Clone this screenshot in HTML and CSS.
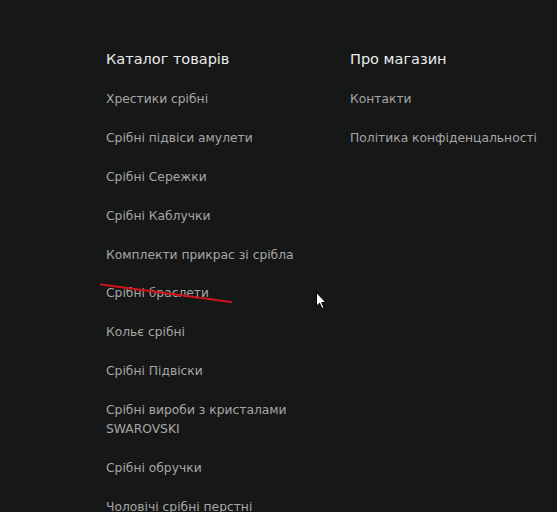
FILE: index.html
```html
<!DOCTYPE html>
<html lang="uk">
<head>
<meta charset="utf-8">
<link rel="stylesheet" href="styles.css">
</head>
<body>
<footer class="footer">
  <div class="col col-catalog">
    <h3 class="col-title">Каталог товарів</h3>
    <ul class="links">
      <li><a href="#">Хрестики срібні</a></li>
      <li><a href="#">Срібні підвіси амулети</a></li>
      <li><a href="#">Срібні Сережки</a></li>
      <li><a href="#">Срібні Каблучки</a></li>
      <li><a href="#">Комплекти прикрас зі срібла</a></li>
      <li><a href="#">Срібні браслети</a></li>
      <li><a href="#">Кольє срібні</a></li>
      <li><a href="#">Срібні Підвіски</a></li>
      <li><a href="#">Срібні вироби з кристалами SWAROVSKI</a></li>
      <li><a href="#">Срібні обручки</a></li>
      <li><a href="#">Чоловічі срібні перстні</a></li>
    </ul>
  </div>
  <div class="col col-about">
    <h3 class="col-title">Про магазин</h3>
    <ul class="links">
      <li><a href="#">Контакти</a></li>
      <li><a href="#">Політика конфіденцальності</a></li>
    </ul>
  </div>
</footer>
<svg class="annotation" width="557" height="512" viewBox="0 0 557 512">
  <line x1="101" y1="284.5" x2="231" y2="302" stroke="#d0141a" stroke-width="2.2" stroke-linecap="round"/>
</svg>
<svg class="cursor" width="12" height="18" viewBox="0 0 12 18">
  <path d="M0.5 0.5 L0.5 14 L3.6 11.2 L6 16.5 L8 15.6 L5.7 10.5 L9.8 10.5 Z" fill="#ffffff" stroke="#000000" stroke-width="1"/>
</svg>
</body>
</html>
```

FILE: styles.css
```css
html, body {
  margin: 0;
  padding: 0;
  background: #161717;
  height: 100%;
  overflow: hidden;
}
body {
  font-family: "DejaVu Sans", sans-serif;
  position: relative;
}
.footer {
  display: flex;
  gap: 30px;
  padding: 48px 0 0 106px;
}
.col-catalog { width: 214px; }
.col-about { width: 200px; }
.col-title {
  margin: 0 0 20px;
  font-size: 14.5px;
  font-weight: normal;
  color: #ececec;
  line-height: 22px;
}
.links {
  list-style: none;
  margin: 0;
  padding: 0;
  display: flex;
  flex-direction: column;
  gap: 19.9px;
}
.links a {
  display: block;
  color: #a6a6a6;
  font-size: 12.3px;
  line-height: 19px;
  text-decoration: none;
}
.annotation {
  position: absolute;
  left: 0;
  top: 0;
  pointer-events: none;
}
.cursor {
  position: absolute;
  left: 316px;
  top: 292px;
}
```
